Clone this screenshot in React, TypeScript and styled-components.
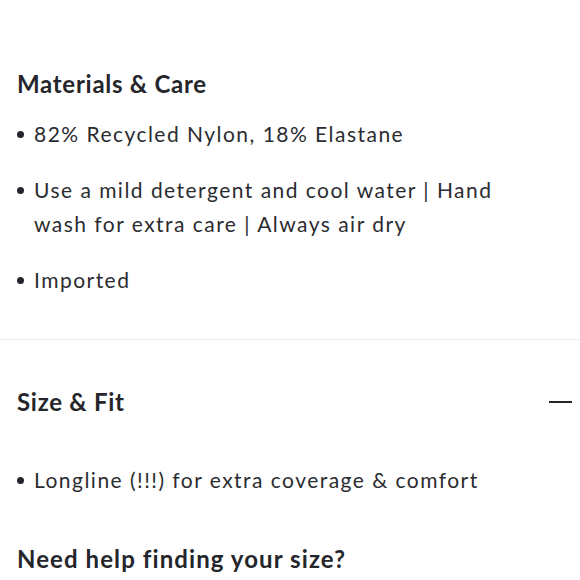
import React from "react";
import styled, { createGlobalStyle } from "styled-components";

const GlobalStyle = createGlobalStyle`
  html, body {
    margin: 0;
    padding: 0;
    background: #ffffff;
  }
  body {
    font-family: Lato, "Noto Sans", sans-serif;
    color: #25262b;
  }
`;

const Page = styled.div`
  width: 580px;
  overflow: hidden;
`;

const Section = styled.section<{ $divider?: boolean }>`
  padding: ${(p) => (p.$divider ? "46px 8px 0 17px" : "68px 8px 42px 17px")};
  border-top: ${(p) => (p.$divider ? "1px solid #ececec" : "none")};
`;

const Header = styled.div`
  display: flex;
  align-items: center;
  justify-content: space-between;
`;

const Title = styled.h2`
  margin: 0;
  font-size: 24px;
  line-height: 32px;
  font-weight: 700;
  letter-spacing: 0.03em;
`;

const SubTitle = styled.h3`
  margin: 0;
  font-size: 24px;
  line-height: 32px;
  font-weight: 700;
  letter-spacing: 0.045em;
`;

const Minus = styled.span`
  display: block;
  width: 23px;
  height: 2px;
  background: #25262b;
`;

const List = styled.ul<{ $top: number }>`
  list-style: none;
  margin: ${(p) => p.$top}px 0 0;
  padding: 0;
  max-width: 496px;
  display: flex;
  flex-direction: column;
  gap: 22px;
`;

const Item = styled.li`
  position: relative;
  padding-left: 17px;
  font-size: 21px;
  line-height: 34px;
  letter-spacing: 0.07em;
  color: #2b2c30;

  &::before {
    content: "";
    position: absolute;
    left: 0;
    top: 14px;
    width: 7px;
    height: 7px;
    border-radius: 50%;
    background: #25262b;
  }
`;

const Help = styled.div`
  margin-top: 46px;
`;

export default function App() {
  return (
    <Page>
      <GlobalStyle />
      <Section>
        <Title>Materials &amp; Care</Title>
        <List $top={17}>
          <Item>82% Recycled Nylon, 18% Elastane</Item>
          <Item>Use a mild detergent and cool water | Hand wash for extra care | Always air dry</Item>
          <Item>Imported</Item>
        </List>
      </Section>
      <Section $divider>
        <Header>
          <Title>Size &amp; Fit</Title>
          <Minus />
        </Header>
        <List $top={45}>
          <Item>Longline (!!!) for extra coverage &amp; comfort</Item>
        </List>
        <Help>
          <SubTitle>Need help finding your size?</SubTitle>
        </Help>
      </Section>
    </Page>
  );
}
